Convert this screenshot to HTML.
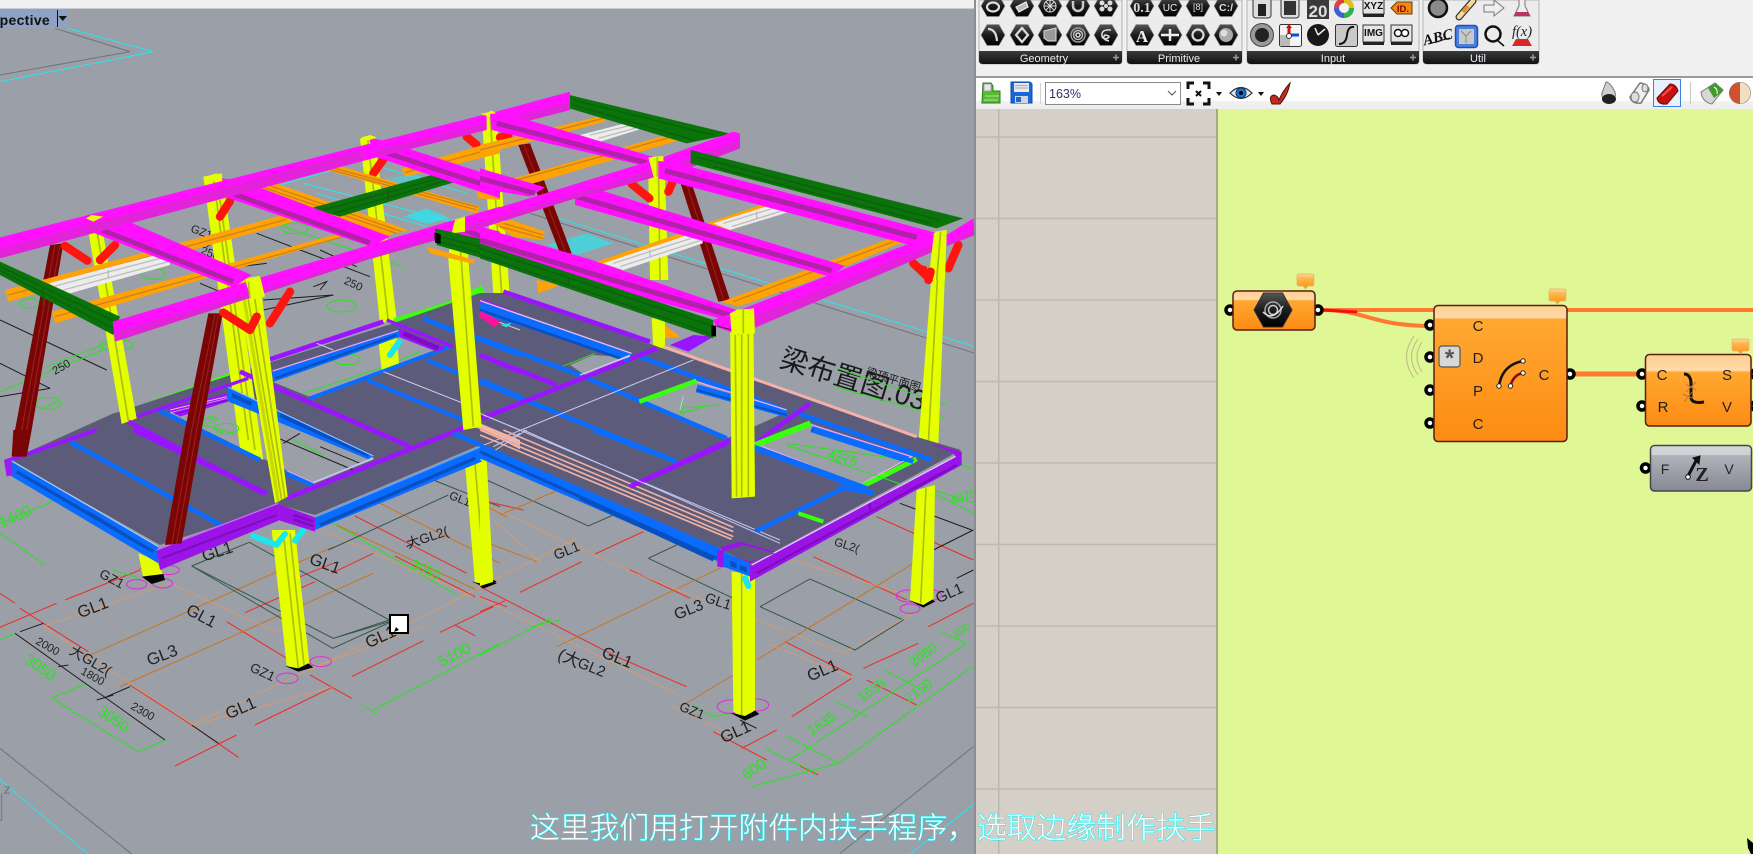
<!DOCTYPE html>
<html lang="zh"><head><meta charset="utf-8"><title>Rhino Grasshopper</title>
<style>
html,body{margin:0;padding:0;background:#f0f0f0;overflow:hidden}
svg{display:block}
text{font-family:"Liberation Sans","Noto Sans CJK SC",sans-serif}
.r{stroke:#f02a20;stroke-width:3;fill:none}
.g{stroke:#25e61c;stroke-width:3;fill:none}
.o{stroke:#c8751c;stroke-width:3;fill:none}
.p{stroke:#f09a55;stroke-width:3;stroke-dasharray:5 3;fill:none}
.k{stroke:#1c1c1c;stroke-width:3;fill:none}
.d{stroke:#34574a;stroke-width:3;fill:none}
.m{stroke:#e22ad8;stroke-width:3;fill:none}
.t{fill:#222;font-size:50px}
.tg{fill:#25e61c;font-size:46px}
.ts{fill:#222;font-size:34px}
.y{fill:#e4ff00}
.ys{stroke:#aebd10;stroke-width:5;fill:none}
.pk{fill:#ff10ff}
.ps{fill:#cf30c2}
.pw{stroke:#b022a8;fill:none}
.gn{fill:#0a740a}
.gl{stroke:#0d5f0d;stroke-width:4;fill:none}
.or{fill:#ffa205}
.ol{stroke:#c9831a;stroke-width:4;fill:none}
.wh{fill:#ececec}
.wl{stroke:#bdbdbd;stroke-width:4;fill:none}
.dr{fill:#7a0505}
.dl{stroke:#9c2222;stroke-width:3;fill:none}
.rd{stroke:#ff1510;stroke-width:25;fill:none;stroke-linejoin:round;stroke-linecap:round}
.cy{stroke:#1be6f0;stroke-width:18;fill:none;stroke-linejoin:round;stroke-linecap:round}
.bl{stroke:#0a6cff;fill:none}
.pu{stroke:#9a14ff;fill:none}
.lm{stroke:#3cff10;fill:none}
.lab{fill:#222;font-size:15px}
.bar{fill:#e8eef2;font-size:11px;text-anchor:middle}
.gr{fill:#fff;stroke:#000;stroke-width:3.5}
</style></head><body>
<svg xmlns="http://www.w3.org/2000/svg" width="1753" height="854" viewBox="0 0 1753 854">
<defs>
<linearGradient id="og" x1="0" y1="0" x2="0" y2="1"><stop offset="0" stop-color="#ffcf90"/><stop offset=".09" stop-color="#ffd9a8"/><stop offset=".1" stop-color="#ffa831"/><stop offset="1" stop-color="#fd8b12"/></linearGradient>
<linearGradient id="og2" x1="0" y1="0" x2="0" y2="1"><stop offset="0" stop-color="#ffcf90"/><stop offset=".22" stop-color="#ffd9a8"/><stop offset=".25" stop-color="#ffa831"/><stop offset="1" stop-color="#fd8b12"/></linearGradient>
<linearGradient id="gy" x1="0" y1="0" x2="0" y2="1"><stop offset="0" stop-color="#d4d6da"/><stop offset=".2" stop-color="#cfd1d5"/><stop offset=".22" stop-color="#b0b3ba"/><stop offset="1" stop-color="#868993"/></linearGradient>
<linearGradient id="hx" x1="0" y1="0" x2="0" y2="1"><stop offset="0" stop-color="#555"/><stop offset=".5" stop-color="#1c1c1c"/><stop offset="1" stop-color="#000"/></linearGradient>
<linearGradient id="br" x1="0" y1="0" x2="0" y2="1"><stop offset="0" stop-color="#3a3a3a"/><stop offset="1" stop-color="#111"/></linearGradient>
<linearGradient id="tb" x1="0" y1="0" x2="0" y2="1"><stop offset="0" stop-color="#fff"/><stop offset=".75" stop-color="#fdfdfd"/><stop offset=".78" stop-color="#f0f0f0"/><stop offset="1" stop-color="#eee"/></linearGradient>
<linearGradient id="bub" x1="0" y1="0" x2="0" y2="1"><stop offset="0" stop-color="#ffd9a0"/><stop offset=".3" stop-color="#ffb64a"/><stop offset="1" stop-color="#fc9416"/></linearGradient>
<path id="h" d="M-12 0L-6-10.500H6L12 0 6 10.500H-6Z" fill="url(#hx)" stroke="#999" stroke-width=".6"/>
<path id="bb" d="M2 0H15Q17 0 17 2V10Q17 12 15 12H11L8.500 15 6 12H2Q0 12 0 10V2Q0 0 2 0Z" fill="url(#bub)" stroke="#e4b070" stroke-width=".7"/>
</defs>

<!-- viewport -->
<rect width="1753" height="854" fill="#f0f0f0"/>
<rect x="0" y="8" width="975" height="846" fill="#9b9fa8"/>
<rect x="0" y="8" width="975" height="1" fill="#c8ccd2"/>

<!-- far lines -->
<g transform="scale(.33333)" fill="none">
<path d="M165 85L390 155 0 225" stroke="#6f7276" stroke-width="3"/>
<path d="M205 85L460 155 0 245" stroke="#22e8ee" stroke-width="3"/>
</g>
<g transform="translate(480 80) scale(.33333)" fill="none">
<path d="M150 400L1485 820" stroke="#6f7276" stroke-width="3"/>
<path d="M220 410L1485 800" stroke="#22e8ee" stroke-width="3"/>
<path d="M200 495L320 460 400 490 290 525Z" fill="#34dfe8" opacity=".75"/>
</g>
<g transform="scale(.33333)" fill="none">
<path d="M840 555L1000 510M910 550L1360 665M950 580L1280 680M1140 500L1400 580" stroke="#2ae6ee" stroke-width="3"/>
<path d="M1210 650L1280 625 1350 655 1280 672Z" fill="#34dfe8" opacity=".85"/>
<path d="M1140 540L1240 520 1300 545 1200 565Z" fill="#34dfe8" opacity=".5"/>
<!-- drawing seen through upper structure -->
<path class="k" d="M0 960L320 1110M0 1090L150 1165M0 1190L150 1165 M770 700L1110 830M960 750L1070 800M600 850L790 930 1000 885 790 900"/>
<path class="k" d="M720 800L800 790M620 740L690 700M940 860L980 845 960 870"/>
<path class="g" d="M140 1100L320 1030M0 1175L310 1050M130 1225L180 1200M850 680L1210 800"/>
<ellipse class="g" cx="460" cy="822" rx="36" ry="16"/><ellipse class="g" cx="1025" cy="918" rx="44" ry="18"/><ellipse class="g" cx="90" cy="910" rx="30" ry="14"/><ellipse class="g" cx="145" cy="1210" rx="38" ry="18"/><ellipse class="g" cx="885" cy="685" rx="40" ry="16"/>
<ellipse class="g" cx="1040" cy="1080" rx="40" ry="16"/><ellipse class="g" cx="350" cy="1035" rx="50" ry="16"/>
<text class="ts" transform="translate(570 695) rotate(20)">GZ1</text>
<text class="ts" transform="translate(1030 850) rotate(25)">250</text>
<text class="ts" transform="translate(165 1125) rotate(-30)">250</text>
<text class="ts" transform="translate(600 760) rotate(20)">250</text>
</g>
<g transform="translate(0 430) scale(.33333)" fill="none">
<path d="M0 955L395 1272" stroke="#6f7276" stroke-width="3"/>
<path d="M0 1050L265 1272" stroke="#22e8ee" stroke-width="3"/>
<path d="M5 1090V1170L0 1172" stroke="#777" stroke-width="3"/>
<text x="12" y="1090" fill="#666" font-size="30" stroke="none">Z</text>

<path class="r" d="M0 592L170 520M195 510L420 420M0 490L45 520M60 535L130 580 265 665M390 765L575 885 715 982M525 1008L710 915M765 885L1000 770M1055 740L1270 632M1320 607L1480 530M680 575L860 685M930 735L1055 805M735 548L945 455M995 430L1120 370M1065 258L1400 430M1185 378L1425 500M1365 585L1425 617M1000 400L900 440M480 400L420 415"/>
<path class="g" d="M0 630L45 610M0 310L135 405M155 805L415 965M155 805L260 760M415 965L495 930M1085 825L1135 855M1120 840L1500 640M1000 280L1370 495M0 280L170 210M340 420L420 445"/>
<path class="o" d="M260 680L910 390M360 770L1120 430M1100 200L1500 400M1010 285L1430 480M890 400L1000 350"/>
<path class="p" d="M130 590L510 460M130 590L580 885 1000 770M510 460L840 610M575 885L1310 540 1500 440M920 720L1270 590M850 250L1420 500"/>
<path class="k" d="M45 610L495 930M60 605L130 580M320 800L390 770M575 885L655 940M290 810L340 795M175 710L205 705M1220 350L1240 340"/>
<path class="d" d="M575 408L748 337 1168 570 1000 625 575 408M575 408L998 655 1168 578M1000 625L1168 575M985 360L1345 195M1300 150L1500 230"/>
<ellipse class="m" cx="410" cy="463" rx="30" ry="14"/><ellipse class="m" cx="488" cy="460" rx="30" ry="14"/><ellipse class="m" cx="505" cy="420" rx="33" ry="14"/>
<ellipse class="m" cx="862" cy="745" rx="32" ry="16"/><ellipse class="m" cx="962" cy="695" rx="32" ry="15"/>
<text class="t" transform="translate(240 565) rotate(-21)">GL1</text>
<text class="t" transform="translate(555 550) rotate(28)">GL1</text>
<text class="t" transform="translate(448 708) rotate(-21)">GL3</text>
<text class="t" transform="translate(685 868) rotate(-23)">GL1</text>
<text class="t" transform="translate(612 395) rotate(-18)">GL1</text>
<text class="t" transform="translate(925 400) rotate(20)">GL1</text>
<text class="t" transform="translate(1105 655) rotate(-24)">GL1</text>
<text class="t" transform="translate(1225 355) rotate(-18) scale(.8)">大GL2(</text>
<text class="t" transform="translate(295 440) rotate(28) scale(.8)">GZ1</text>
<text class="t" transform="translate(747 722) rotate(25) scale(.8)">GZ1</text>
<text class="t" transform="translate(205 670) rotate(30) scale(.85)">大GL2(</text>
<text class="t" transform="translate(1345 205) rotate(22) scale(.7)">GL1</text>
<text class="tg" transform="translate(1325 712) rotate(-28)">5100</text>
<text class="tg" transform="translate(70 695) rotate(35)">3050</text>
<text class="tg" transform="translate(290 850) rotate(35)">3050</text>
<text class="tg" transform="translate(5 295) rotate(-24)">1400</text>
<text class="tg" transform="translate(1230 412) rotate(25) scale(.9)">3050</text>
<text class="ts" transform="translate(105 640) rotate(30)">2000</text>
<text class="ts" transform="translate(390 835) rotate(30)">2300</text>
<text class="ts" transform="translate(240 730) rotate(30)">1800</text>
</g>
<g transform="translate(480 430) scale(.33333)" fill="none">
<path class="d" d="M20 150L325 288 400 255M505 385L590 345M505 385L760 505M840 530L990 447 1270 570 1125 660 840 530"/>
<path class="r" d="M0 545L75 512M120 487L305 395M345 372L490 305M0 470L410 680 620 770M130 240L0 210 M450 420L630 505M785 955L890 900M935 860L1115 745M1150 715L1315 640M1345 590L1480 520M915 635L1115 735M1160 750L1310 825M0 500L80 530M1190 260L1480 390M1000 380L1280 510M960 1008L1015 1035M700 905L860 990"/>
<path class="o" d="M0 330L170 395M230 650L750 400M610 825L760 735M830 690L1300 400M60 255L270 165M0 220L80 260"/>
<path class="p" d="M10 220L440 420 1090 670M40 450L300 320M0 505L610 800M575 830L750 910M860 640L1120 745 M820 355L1300 500M1090 670L1300 550M20 250L180 395"/>
<path class="k" d="M1360 360L1480 300M1260 220L1475 300M1430 445L1480 420M780 870L830 895"/>
<path class="g" d="M0 675L215 565M155 590L240 570M815 1070L1075 1000M1075 1000L1485 705M855 955L1010 1030M930 990L1460 640M915 915L1075 1000M1065 815L1165 860M1210 720L1310 770M1380 605L1460 640M1480 120L1360 60M1290 155L1480 250M640 825L700 860 750 850"/>
<ellipse class="m" cx="750" cy="830" rx="38" ry="20"/><ellipse class="m" cx="830" cy="825" rx="36" ry="18"/><ellipse class="m" cx="1285" cy="498" rx="36" ry="18"/><ellipse class="m" cx="1350" cy="495" rx="34" ry="16"/><ellipse class="m" cx="1290" cy="536" rx="30" ry="14"/>
<text class="t" transform="translate(228 390) rotate(-22) scale(.85)">GL1</text>
<text class="t" transform="translate(590 570) rotate(-22) scale(.95)">GL3</text>
<text class="t" transform="translate(672 515) rotate(18) scale(.85)">GL1</text>
<text class="t" transform="translate(362 680) rotate(22)">GL1</text>
<text class="t" transform="translate(230 685) rotate(25)">(大</text>
<text class="t" transform="translate(290 710) rotate(22) scale(.9)">GL2</text>
<text class="t" transform="translate(990 755) rotate(-23)">GL1</text>
<text class="t" transform="translate(730 940) rotate(-24)">GL1</text>
<text class="t" transform="translate(1375 520) rotate(-24) scale(.9)">GL1</text>
<text class="t" transform="translate(595 840) rotate(22) scale(.8)">GZ1</text>
<text class="t" transform="translate(1060 345) rotate(18) scale(.7)">GL2(</text>
<text class="tg" transform="translate(800 1052) rotate(-35)">600</text>
<text class="tg" transform="translate(995 918) rotate(-35) scale(.9)">1635</text>
<text class="tg" transform="translate(1145 818) rotate(-35) scale(.9)">1635</text>
<text class="tg" transform="translate(1300 712) rotate(-35) scale(.9)">2080</text>
<text class="tg" transform="translate(1285 820) rotate(-35) scale(.9)">2150</text>
<text class="tg" transform="translate(1430 625) rotate(-35) scale(.7)">800</text>
<text class="tg" transform="translate(1415 225) rotate(-18) scale(.8)">4075</text>
<path d="M1080 1270L1480 950" stroke="#6f7276" stroke-width="3"/>
<path d="M1290 1272L1485 1120" stroke="#22e8ee" stroke-width="3"/>
</g>
<!-- big drawing title -->
<g transform="translate(480 80) scale(.33333)">
<text transform="translate(895 860) rotate(17)" font-size="84" fill="#1a1a1a">梁布置图.03</text>
<text transform="translate(1155 885) rotate(17)" font-size="34" fill="#1a1a1a">梁顶平面图 1:1</text>
<path class="g" d="M1070 865L1400 975M1060 920L1390 1010M920 1090L1485 1270"/>
</g>

<!-- back columns behind slab -->
<g transform="scale(.33333)">
<path class="y" d="M1080 415L1125 410 1190 960 1140 970Z"/><path class="ys" d="M1103 415L1165 965"/>
</g>
<g transform="translate(480 80) scale(.33333)">
<path class="y" d="M5 100L50 95 100 800 50 800Z"/><path class="ys" d="M30 100L75 800"/>
<path class="y" d="M520 230L553 230 565 600 510 600 505 290Z"/><path class="ys" d="M535 235L540 600"/>
<path class="y" d="M515 715L555 715 555 810 520 800Z"/>
<path class="y" d="M1365 455L1400 450 1375 1090 1315 1090Z"/><path class="ys" d="M1380 455L1345 1090"/>
</g>
<g transform="translate(0 430) scale(.33333)">
<path class="y" d="M415 370L470 390 490 435 430 445Z"/>
<path d="M425 440L490 432 495 450 455 462Z" fill="#050505"/>
<path class="y" d="M815 300L885 300 928 700 895 725 860 705Z"/><path class="ys" d="M850 310L895 715M870 310L912 705"/>
<path d="M855 708L895 725 940 712 925 700 895 715Z" fill="#050505"/>
<path class="y" d="M1395 100L1450 90 1480 450 1450 465 1425 460Z"/><path class="ys" d="M1425 100L1455 455"/>
<path d="M1415 455L1450 470 1490 455 1478 448 1450 462Z" fill="#050505"/>
<path class="cy" d="M760 318L830 345 855 312M885 332L910 300"/>
</g>
<g transform="translate(480 430) scale(.33333)">
<path class="y" d="M0 90L20 90 40 460 0 470Z"/>
<path d="M0 468L42 455 50 460 10 476Z" fill="#050505"/>
<path class="y" d="M755 425L825 430 825 840 795 865 760 845Z"/><path class="ys" d="M785 430V855"/>
<path d="M750 848L795 872 838 852 825 842 795 858Z" fill="#050505"/>
<path class="y" d="M1310 180L1365 165 1360 510 1330 530 1290 510Z"/><path class="ys" d="M1338 175L1322 520"/>
<path d="M1285 510L1330 533 1365 515 1358 508 1330 525Z" fill="#050505"/>
<path class="cy" d="M795 445L805 468" stroke-width="12"/>
</g>

<!-- lime back beams -->
<g transform="scale(.33333)">
<path d="M405 1220L700 1115 705 1135 410 1245Z" fill="#3cff10"/>
<path d="M1180 955L1360 900 1360 925 1185 980Z" fill="#3cff10"/><path class="lm" stroke-width="25" d="M1360 912L1450 868"/>
</g>

<!-- slab -->
<path d="M10 460L160 545 280 505 315 515 480 445 723 550 750 565 961 450 917 437 653 345 510 293 480 293 391 324 240 372 112 414Z" fill="#5c5c7a"/>
<!-- openings -->
<path d="M170 413L227 398 373 458 313 483Z" fill="#9b9fa8"/>
<path d="M273 382L400 337 445 350 380 372 310 397Z" fill="#9b9fa8"/>
<path d="M643 402L697 382 787 412 728 438Z" fill="#9b9fa8"/>
<path d="M757 445L810 423 910 457 860 485Z" fill="#9b9fa8"/>
<path d="M570 365L593 355 625 357 585 375Z" fill="#9b9fa8"/>

<!-- columns that stand inside/over the slab (col 1, col 3) -->
<g transform="scale(.33333)">
<path class="y" d="M258 655L300 650 410 1255 365 1272Z"/><path class="ys" d="M285 655L385 1262"/>
<path class="y" d="M610 530L665 520 730 960 790 1380 720 1345 670 980Z"/><path class="ys" d="M640 530L745 1320M660 600L765 1350"/>
</g>

<!-- floor beams: left-centre region, crop coords -->
<g transform="translate(120 300) scale(.33333)" fill="none">
<!-- ground seen in openings -->
<path class="g" d="M550 280L780 205 900 155M250 375L340 400M520 420L610 465"/>
<ellipse class="g" cx="680" cy="178" rx="40" ry="16"/><ellipse class="g" cx="320" cy="385" rx="36" ry="15"/>
<path class="k" d="M440 400L700 510M490 430L540 400M600 440L720 490"/>
<text class="tg" transform="translate(250 375) rotate(-18) scale(.6)">250</text>
<!-- col 4 lower in opening -->
<path class="y" d="M775 120L830 110 838 200 785 210Z" stroke="none"/>
<path class="cy" d="M810 165L838 125"/>
<!-- lines -->
<path class="bl" stroke-width="14" d="M115 330L420 480M495 520L580 555"/>
<path class="bl" stroke-width="12" d="M570 295L990 140M740 240L1030 360M920 180L1030 225M1085 240L1200 290"/>
<path class="bl" stroke-width="14" d="M910 55L1020 100M1060 110L1200 165"/>
<path class="pu" stroke-width="14" d="M25 365L430 580M360 215L870 440M500 595L1045 378M1085 355L1200 310M450 178L790 65M1080 165L1200 215"/>
<path class="pu" stroke-width="10" d="M50 350L385 235M800 60L1000 140"/>
<!-- purple opening band -->
<path d="M140 325L320 280 325 305 180 350Z" fill="#9a14ff"/>
<path d="M150 330L320 290" stroke="#f0b0f0" stroke-width="3"/><path d="M165 342L322 300" stroke="#7e0cc0" stroke-width="4"/>
<!-- thick blue stub beam -->
<path d="M320 258L760 465 745 478 400 335 325 305Z" fill="#0a6cff"/>
<path d="M335 285L395 312M480 345L745 465" stroke="#0850c0" stroke-width="12"/>
<path d="M325 262L760 468" stroke="#9fc6ff" stroke-width="3"/>
<path d="M580 548L760 475" stroke="#c8c0f0" stroke-width="6"/>
<path d="M500 512L580 548" stroke="#f0a0f0" stroke-width="3"/>
<path d="M150 338L322 295" stroke="#f0b0f0" stroke-width="2"/>
<!-- right double blue beam -->
<path d="M455 215L835 88 840 110 462 245Z" fill="#0a6cff"/>
<path d="M465 235L830 105" stroke="#0850c0" stroke-width="7"/>
<path d="M458 213L835 92" stroke="#f0a0f0" stroke-width="4"/>
<path d="M838 85L978 143 950 155 840 112Z" fill="#9a14ff"/>
<path d="M850 100L955 145" stroke="#7e0cc0" stroke-width="14"/>
<path d="M590 130L640 150M1120 60L1200 90" stroke="#d0d0f0" stroke-width="3"/>
<path stroke="#d5d0f0" stroke-width="3" d="M790 215L1030 310M1090 345L1200 390M1120 440L1200 400"/>
<!-- top right bits -->
<path d="M1075 5L1095 0 1200 40 1200 55 1090 15Z" fill="#9a14ff"/>
<path d="M1085 15L1200 55 1200 80 1085 40Z" fill="#0a6cff"/>
<path d="M1095 32L1200 70" stroke="#0850c0" stroke-width="7"/>
<path d="M1090 42L1135 72" stroke="#ff10a0" stroke-width="16"/>
<!-- pink rail -->
<path d="M1050 370L1075 368 1200 420 1200 448Z" fill="#f5b8a8"/>
<path d="M1060 378L1200 436" stroke="#e59a90" stroke-width="3"/>
<path d="M1000 400L1082 435" stroke="#0a6cff" stroke-width="14"/>
</g>
<g transform="translate(480 80) scale(.33333)">
<path class="g" d="M245 860L345 820M600 985L720 975M920 1090L1280 1140M660 985L600 1000M610 960L600 1000" />
<text class="tg" transform="translate(1040 1135) rotate(16) scale(.9)">4275</text>
<path class="bl" stroke-width="14" d="M0 775L300 885 740 1075M0 905L590 1145M480 830L900 985M940 995L1355 1140M825 1105L1180 1240"/>
<path class="pu" stroke-width="14" d="M70 635L510 785M20 1010L530 805M0 825L230 915M450 1220L740 1090M820 1095L990 970"/>
<path d="M570 795L640 765 700 770 625 815Z" fill="#9a14ff"/>
<path class="bl" stroke-width="30" d="M0 680L450 832"/>
<path stroke="#0850c0" stroke-width="8" fill="none" d="M0 690L430 838"/>
<path stroke="#f0b8e8" stroke-width="4" fill="none" d="M0 662L455 820M300 885L450 828"/>
<path stroke="#f5b0a8" stroke-width="9" fill="none" d="M550 800L1310 1070"/>
<path class="bl" stroke-width="24" d="M650 925L920 1000M995 1045L1290 1140"/>
<path stroke="#0850c0" stroke-width="6" fill="none" d="M650 930L920 1005M995 1050L1290 1145"/>
<path stroke="#f0a8f0" stroke-width="4" fill="none" d="M650 905L920 990M835 1095L1140 1215 1295 1130 995 1035"/>
<path class="lm" stroke-width="14" d="M478 965L650 902"/>
<path class="lm" stroke-width="18" d="M825 1095L992 1030"/>
<path class="lm" stroke-width="15" d="M1145 1220L1310 1137"/>
<path stroke="#c8c8f0" stroke-width="3" fill="none" d="M0 1100L640 840M0 1000L900 1380M300 885L450 825M610 950L600 990"/>
<path stroke="#ff10a0" stroke-width="18" fill="none" d="M0 700L50 735"/><path d="M62 735L95 728 80 742Z" fill="#1be6f0"/>
</g>
<g transform="translate(0 430) scale(.33333)">
<path class="bl" stroke-width="14" d="M210 35L680 295"/>
<path class="pu" stroke-width="14" d="M400 0L800 190"/>
<path class="pu" stroke-width="12" d="M15 95L290 0"/>
<!-- front edge beams -->
<path d="M25 90L475 350 475 400 20 130Z" fill="#0a6cff"/>
<path d="M50 125L460 365M260 245L400 330" stroke="#0850c0" stroke-width="10" fill="none"/>
<path d="M35 92L475 350" stroke="#a8d0ff" stroke-width="3" fill="none"/>
<path d="M12 92L35 90 38 135 20 140Z" fill="#a01bf0"/>
<path d="M470 360L835 220 840 270 480 420Z" fill="#9a14e8"/>
<path d="M485 385L830 255" stroke="#7e0cc0" stroke-width="6" fill="none"/>
<path d="M470 360L835 220" stroke="#c66cff" stroke-width="4" fill="none"/>
<path d="M835 222L945 262 945 305 840 272Z" fill="#9a14e8"/>
<path d="M880 255L940 275M880 268L940 288" stroke="#7e0cc0" stroke-width="8" fill="none"/>
<path d="M945 260L1440 50 1445 95 945 300Z" fill="#0a6cff"/>
<path d="M960 285L1425 85" stroke="#0850c0" stroke-width="10" fill="none"/>
<path d="M945 262L1440 52" stroke="#6aa8ff" stroke-width="3" fill="none"/>
</g>
<g transform="translate(480 430) scale(.33333)">
<path stroke="#f0b0a0" stroke-width="5" fill="none" d="M0 0L760 320M30 0L760 305M70 0L760 292M0 15L755 328"/>
<path class="bl" stroke-width="14" d="M340 0L590 95M825 305L1100 170M1075 170L1180 190M820 50L1160 175M1000 0L1300 95"/>
<path class="pu" stroke-width="14" d="M450 170L750 30"/>
<path class="lm" stroke-width="12" d="M955 250L1030 275"/>
<path stroke="#c8c8f0" stroke-width="3" fill="none" d="M130 0L900 340M0 90L140 0"/>
<path class="g" d="M920 45L1285 170M1050 70L1100 90"/>
<path d="M0 40L720 355 715 395 0 85Z" fill="#0a6cff"/>
<path d="M0 65L710 385M300 205L700 390" stroke="#0850c0" stroke-width="9" fill="none"/>
<path d="M712 365L735 350 735 412 712 410Z" fill="#9a14e8"/>
<path d="M730 365L810 400 810 440 730 410Z" fill="#0a6cff"/>
<path d="M750 392L770 400V415L750 408ZM780 405L800 412V428L780 420Z" fill="#0850c0"/>
<path d="M810 405L1440 70 1445 105 810 455Z" fill="#9a14e8"/>
<path d="M830 430L1430 105M1170 240L1170 215" stroke="#7e0cc0" stroke-width="7" fill="none"/>
<path d="M815 405L1440 72" stroke="#e6c8ff" stroke-width="4" fill="none"/>
<path d="M1350 40L1445 65 1445 105 1420 70Z" fill="#9a14e8"/>
<path d="M720 352L780 335 885 365 810 400Z" fill="#9a14e8"/>
<path d="M790 345L885 370 810 395 730 365Z" fill="#5c5c7a"/>
</g>

<!-- front columns + braces -->
<g transform="scale(.33333)">
<path class="dr" d="M150 735L190 730 95 1290 45 1290Z"/><path class="dl" d="M165 735L65 1290M180 735L80 1290"/>
<path class="y" d="M708 840L778 828 863 1490 825 1510Z"/>
<path class="ys" d="M735 840L845 1500M755 835L855 1495"/>
<path d="M723 840L835 1505" stroke="#c6d900" stroke-width="10" fill="none"/>
<path class="dr" d="M625 940L668 940 605 1290 555 1290Z"/><path class="dl" d="M645 945L575 1290M655 945L590 1290"/>
<path class="y" d="M1355 660L1395 650 1445 1280 1390 1290 1345 780Z"/><path class="ys" d="M1375 660L1420 1280"/>
</g>
<g transform="translate(0 430) scale(.33333)">
<path class="dr" d="M40 0L95 0 80 80 35 80Z"/>
<path class="dr" d="M555 0L605 0 545 340 495 345Z"/><path class="dl" d="M575 0L515 345M590 0L530 342"/>
</g>
<g transform="translate(480 80) scale(.33333)">
<path class="y" d="M750 690L820 685 825 1250 755 1255Z"/><path class="ys" d="M785 690V1250M765 690L770 1250M805 690V1250"/>
</g>

<!-- upper: reds -->
<g transform="scale(.33333)">
<path class="rd" d="M195 738L262 782M300 780L345 735M660 650L690 603M670 938L750 990 770 950M810 970L870 875M1120 520L1150 478M1400 410L1430 435"/>
</g>
<g transform="translate(480 80) scale(.33333)">
<path class="rd" d="M455 312L508 355M565 335L578 305M60 172L85 168M1300 550L1348 595M1405 565L1435 495"/>
<path class="dr" d="M115 195L150 190 275 520 240 520Z"/><path class="dl" d="M132 195L258 520"/>
<path class="dr" d="M600 305L635 310 750 660 715 665Z"/><path class="dl" d="M618 305L733 665"/>
</g>
<!-- orange + white purlins -->
<g transform="scale(.33333)">
<path class="or" d="M15 870L850 645 880 665 25 905Z"/><path class="ol" d="M25 885L860 658"/>
<path class="or" d="M155 935L1020 700 1050 705 165 970Z"/><path class="ol" d="M165 950L1030 710"/>
<path class="or" d="M745 550L800 540 1225 690 1150 710Z"/><path class="ol" d="M770 555L1190 700M790 550L1205 695"/>
<path class="or" d="M945 500L990 490 1440 620 1430 640Z"/><path class="ol" d="M970 503L1430 630M985 500L1435 622"/>
<path class="or" d="M1205 505L1500 420 1500 460 1215 530Z"/><path class="ol" d="M1215 518L1500 440"/>
<path class="or" d="M1280 740L1425 780 1420 792 1290 760Z"/><path class="or" d="M1430 570L1500 595 1500 600 1435 595Z"/>
<path class="wh" d="M145 850L505 755 510 795 210 880Z"/><path class="wl" d="M165 858L500 770M190 870L505 785M325 810V835"/>
</g>
<g transform="translate(480 80) scale(.33333)">
<path class="or" d="M0 195L375 105 375 125 0 225Z"/><path class="ol" d="M0 210L370 115"/>
<path class="or" d="M100 295L560 165 600 180 160 310Z"/><path class="ol" d="M110 300L570 172"/>
<path class="or" d="M0 330L20 325 0 355Z"/>
<path class="or" d="M40 430L95 420 195 455 190 480 100 470Z"/><path class="ol" d="M70 430L190 465M60 440L190 475"/>
<path class="or" d="M350 545L600 460 640 465 430 570Z"/>
<path class="or" d="M725 665L1230 475 1270 485 1000 600 775 680Z"/><path class="ol" d="M760 665L1240 485"/>
<path class="or" d="M680 430L850 372 860 380 750 450Z"/>
<path class="or" d="M170 600L240 615 175 640Z"/><path class="or" d="M555 735L600 770 555 775Z"/>
<path class="wh" d="M370 550L668 450 668 490 430 570Z"/><path class="wl" d="M400 550L665 465M420 560L665 480M510 510V530"/>
<path class="wh" d="M700 430L935 355 930 395 750 450Z"/><path class="wl" d="M730 430L930 370M755 440L930 385M830 395V415"/>
<path class="wh" d="M300 165L505 112 505 140 360 185Z"/><path class="wl" d="M330 165L500 125M355 175L500 135"/>
</g>
<!-- green + magenta -->
<g transform="scale(.33333)">
<path class="gn" d="M0 785L360 950 340 1005 0 825Z"/><path class="gl" d="M0 800L345 965M0 812L340 985M130 860L130 915"/>
<path class="gn" d="M930 625L1375 503 1385 510 1385 540 1020 650Z"/><path class="gl" d="M970 630L1380 518M1000 640L1380 530M1165 570V600"/>
<!-- cross beams -->
<path class="pk" d="M280 645L340 645 755 825 700 862 285 700Z"/>
<path class="pw" stroke-width="15" d="M305 690L700 845"/>
<path class="pk" d="M665 535L725 542 1170 710 1112 740 688 595Z"/>
<path class="pw" stroke-width="15" d="M690 578L1110 728"/>
<path class="pk" d="M1105 412L1150 422 1500 535 1500 595 1125 470Z"/>
<path class="pw" stroke-width="15" d="M1125 447L1500 570"/>
<path class="pk" d="M1380 665L1500 695 1500 765 1370 710Z"/>
<path class="pw" stroke-width="15" d="M1395 692L1500 728"/>
<!-- long beams -->
<path class="pk" d="M0 712L1460 342 1460 390 1100 480 0 775Z"/>
<path class="ps" d="M0 745L1090 450 1090 480 0 775ZM1130 450L1460 368 1460 388 1130 470Z" opacity=".6"/>
<path class="y" d="M258 655L275 645 310 650 280 665Z"/><path class="y" d="M610 532L650 520 668 528 640 545Z"/><path class="y" d="M1085 412L1110 405 1130 412 1105 422Z"/>
<path class="y" d="M1450 345L1480 338 1500 345 1475 352Z"/>
<path class="pk" d="M338 965L1355 662 1500 620 1500 665 1100 780 345 1025Z"/>
<path class="ps" d="M345 995L740 882 1080 775 1500 645 1500 665 1100 780 345 1025Z" opacity=".6"/>
<path class="y" d="M735 840L780 828 795 890 755 900Z"/><path class="ys" d="M745 845L750 895"/>
<path class="y" d="M1365 660L1395 650 1395 695 1355 700Z"/>
<path class="gn" d="M1305 685L1500 730 1500 790 1310 735Z"/><path class="gl" d="M1320 710L1500 755M1320 725L1500 775"/>
<path d="M1303 698L1322 702 1322 732 1305 728Z" fill="#000"/>
</g>
<g transform="translate(480 80) scale(.33333)">
<path class="gn" d="M268 45L755 162 620 190 268 85Z"/><path class="gl" d="M280 60L700 165M280 75L640 180"/>
<path class="pk" d="M30 100L270 35 270 90 40 150Z"/><path class="ps" d="M40 125L270 65 270 90 40 150Z" opacity=".6"/>
<path class="y" d="M15 100L35 92 50 100 25 110Z"/>
<!-- upper far cap -->
<path class="pk" d="M540 235L760 155 780 160 780 205 560 290Z"/><path class="ps" d="M580 255L775 180 780 205 580 280Z" opacity=".6"/>
<path class="pk" d="M30 102L68 98 525 232 512 262 35 150Z"/><path class="pw" stroke-width="15" d="M50 130L500 248"/>
<path class="pk" d="M0 265L195 322 150 350 0 325Z"/><path class="pw" stroke-width="15" d="M0 295L165 340"/>
<path class="pk" d="M285 325L365 332 1095 558 1050 590 285 375Z"/><path class="pw" stroke-width="15" d="M290 350L1055 572"/>
<path d="M0 400L520 240 530 290 270 360 0 445Z" fill="#ff10ff"/><path class="ps" d="M0 428L520 268 530 290 270 360 0 445Z" opacity=".6"/>
<path class="y" d="M505 232L550 228 552 290 522 295Z"/><path class="ys" d="M532 232V290"/>
<path class="gn" d="M632 210L1450 415 1370 445 632 250Z"/><path class="gl" d="M645 230L1380 420M700 260L1350 430"/>
<path class="pk" d="M535 243L585 248 1365 458 1290 495 535 295Z"/><path class="pw" stroke-width="16" d="M555 272L1310 472"/>
<path class="pk" d="M0 442L330 538 775 692 755 724 0 523Z"/><path class="pw" stroke-width="16" d="M0 480L750 706"/>
<path class="gn" d="M0 490L700 720 700 775 0 535Z"/><path class="gl" d="M0 505L690 735M0 525L690 760M265 590V615"/>
<path d="M694 735L708 738 708 770 694 768Z" fill="#000"/>
<path class="pk" d="M700 720L780 690 1365 460 1360 515 820 745 775 765 708 740Z"/>
<path class="ps" d="M820 708L1365 492 1360 515 820 745Z" opacity=".6"/>
<path d="M710 738L765 752" stroke="#333" stroke-width="3"/>
<path class="pk" d="M1400 465L1480 415 1485 465 1400 498Z"/><path class="ps" d="M1405 488L1480 448 1485 465 1400 498Z" opacity=".6"/>
<path class="y" d="M1362 460L1400 450 1395 600 1345 600Z"/><path class="ys" d="M1382 455L1370 600"/>
<path class="y" d="M770 690L822 685 825 760 755 765 750 700Z"/><path class="ys" d="M790 690V760"/>
<path d="M1295 545L1340 560 1350 605 1325 590Z" fill="#ff1510"/>
<path class="rd" d="M1345 600L1352 575"/>
</g>

<!-- cursor box -->
<rect x="390" y="615" width="18" height="18" fill="#fff" stroke="#000" stroke-width="2"/>
<path d="M396 627L394 632 399 630Z" fill="#000"/>

<!-- toolbar tab -->
<rect x="0" y="9" width="68" height="19" fill="#8fa2c4"/>
<text x="50" y="25" text-anchor="end" font-size="14" font-weight="700" fill="#111" style="letter-spacing:.3px">pective</text>
<rect x="57" y="10" width="1" height="17" fill="#111"/>
<path d="M58.500 16H67L62.800 21Z" fill="#111"/>

<!-- right side panel -->
<rect x="975" y="0" width="778" height="854" fill="#f0f0f0"/>
<rect x="974" y="0" width="2" height="854" fill="#8a8d92"/>
<!-- canvas -->
<rect x="976" y="108" width="241" height="746" fill="#d4d0c8"/>
<path d="M976 137H1217M976 218.500H1217M976 300H1217M976 381.500H1217M976 463H1217M976 544.500H1217M976 626H1217M976 707.500H1217M976 789H1217" stroke="#bdb9b1" stroke-width="1.500"/>
<rect x="998" y="108" width="1.500" height="746" fill="#bdb9b1"/>
<rect x="1217" y="108" width="536" height="746" fill="#dff795"/>
<rect x="1216" y="108" width="2" height="746" fill="#a7a98f"/>
<path d="M1218 137H1753M1218 218.500H1753M1218 300H1753M1218 381.500H1753M1218 463H1753M1218 544.500H1753M1218 626H1753M1218 707.500H1753M1218 789H1753M1236 108V854M1480 108V854" stroke="#dcf492" stroke-width="1"/>

<!-- toolbar -->
<rect x="976" y="76" width="777" height="33" fill="url(#tb)"/>
<rect x="976" y="76" width="777" height="2" fill="#9a9a9a"/>
<path d="M983 83H991L993 86V91H1000V103H982Z" fill="#58b935" stroke="#2d7a20"/><path d="M984 84H991V91H984Z" fill="#e6e6e6" stroke="#999" stroke-width=".7"/><path d="M985 96H999M984 100H998" stroke="#b5e38a"/>
<path d="M1011 82H1030L1032 84V103H1011Z" fill="#1767d8" stroke="#0f4aa8"/><rect x="1014" y="83" width="15" height="9" fill="#e8e8ea"/><path d="M1015 85.500H1028M1015 88H1028" stroke="#aaa"/><rect x="1015" y="96" width="13" height="7" fill="#d0d4dc"/><rect x="1016" y="97" width="5" height="5" fill="#1767d8"/>
<rect x="1040" y="83" width="1" height="21" fill="#d0d0d0"/>
<rect x="1045.500" y="82.500" width="135" height="22" fill="#fff" stroke="#8a8a8a"/>
<text x="1049" y="98" font-size="12.500" fill="#30306a">163%</text>
<path d="M1168 91L1172 95 1176 91" fill="none" stroke="#666" stroke-width="1.200"/>
<path d="M1188 89V83H1194M1203 83H1209V89M1188 98V104H1194M1203 104H1209V98" fill="none" stroke="#111" stroke-width="3"/><path d="M1196 91L1201 96M1201 91L1196 96" stroke="#111" stroke-width="2"/>
<path d="M1216 92H1222L1219 96Z" fill="#111"/>
<path d="M1230 93Q1241 82 1252 93 1241 104 1230 93Z" fill="#d8e6f4" stroke="#333" stroke-width="1.200"/><circle cx="1241" cy="93" r="5" fill="#1b74c8" stroke="#0c3a6a"/><circle cx="1241" cy="93" r="2" fill="#000"/>
<path d="M1258 92H1264L1261 96Z" fill="#111"/>
<path d="M1272 104Q1268 96 1274 95 1278 96 1279 100 1282 92 1290 83 1288 95 1280 104Z" fill="#c9261c" stroke="#4a1512" stroke-width="1"/>
<path d="M1606 82Q1610 82 1615 92 1617 100 1608 100 1601 100 1602 93Z" fill="#cfcfcf" stroke="#777"/><ellipse cx="1609" cy="99" rx="7" ry="5" fill="#222"/>
<path d="M1630 97L1640 83Q1648 84 1649 90L1641 103Q1632 104 1630 97Z" fill="#f0f0f0" stroke="#777" stroke-width="1.500"/><ellipse cx="1635" cy="97" rx="4" ry="5" fill="#ddd" stroke="#777"/><ellipse cx="1645" cy="88" rx="3" ry="4" fill="#ddd" stroke="#777"/>
<rect x="1653.500" y="79.500" width="27" height="27" fill="#e8f1fb" stroke="#3b83e0"/>
<path d="M1657 98L1670 84Q1676 84 1678 91L1667 104Q1658 105 1657 98Z" fill="#c8100e" stroke="#6a0808"/><path d="M1662 96L1672 87" stroke="#f05050" stroke-width="2"/>
<rect x="1690" y="82" width="1" height="22" fill="#c8c8c8"/>
<path d="M1701 92L1715 83 1723 90 1712 104Q1702 102 1701 92Z" fill="#d6d6d6" stroke="#777"/><path d="M1708 88L1716 83 1723 91 1714 98Z" fill="#3e9a2a"/><path d="M1714 87Q1718 89 1717 94" stroke="#fff" fill="none"/>
<circle cx="1740" cy="93" r="10.500" fill="#e8e8e8" stroke="#777"/><path d="M1740 82.500A10.500 10.500 0 0 0 1740 103.500Z" fill="#d05030"/><path d="M1740 82.500A10.500 10.500 0 0 1 1740 103.500Z" fill="#f0e0c0"/>

<!-- ribbon groups -->
<g>
<path d="M979 0V60Q979 64 983 64H1119Q1122 64 1122 60V0Z" fill="#ececec" stroke="#b5b5b5"/>
<path d="M1127 0V60Q1127 64 1131 64H1239Q1242 64 1242 60V0Z" fill="#ececec" stroke="#b5b5b5"/>
<path d="M1247 0V60Q1247 64 1251 64H1416Q1419 64 1419 60V0Z" fill="#ececec" stroke="#b5b5b5"/>
<path d="M1423 0V60Q1423 64 1427 64H1536Q1539 64 1539 60V0Z" fill="#ececec" stroke="#b5b5b5"/>
<path d="M979 51H1122V60Q1122 64 1119 64H983Q979 64 979 60Z" fill="url(#br)"/>
<path d="M1127 51H1242V60Q1242 64 1239 64H1131Q1127 64 1127 60Z" fill="url(#br)"/>
<path d="M1247 51H1419V60Q1419 64 1416 64H1251Q1247 64 1247 60Z" fill="url(#br)"/>
<path d="M1423 51H1539V60Q1539 64 1536 64H1427Q1423 64 1423 60Z" fill="url(#br)"/>
<text class="bar" x="1044" y="62">Geometry</text><text class="bar" x="1179" y="62">Primitive</text><text class="bar" x="1333" y="62">Input</text><text class="bar" x="1478" y="62">Util</text>
<path d="M1113 57.500H1119M1116 54.500V60.500M1233 57.500H1239M1236 54.500V60.500M1410 57.500H1416M1413 54.500V60.500M1530 57.500H1536M1533 54.500V60.500" stroke="#999" stroke-width="1.600"/>
</g>
<!-- geometry hexes -->
<use href="#h" x="993" y="6"/><use href="#h" x="1022" y="6"/><use href="#h" x="1050" y="6"/><use href="#h" x="1078" y="6"/><use href="#h" x="1106" y="6"/>
<use href="#h" x="993" y="35"/><use href="#h" x="1022" y="35"/><use href="#h" x="1050" y="35"/><use href="#h" x="1078" y="35"/><use href="#h" x="1106" y="35"/>
<g fill="none" stroke="#ddd" stroke-width="2">
<ellipse cx="993" cy="7" rx="6" ry="4.500" stroke-width="2.200"/>
<path d="M1016 7L1026 2 1028 7 1019 12Z" fill="#bbb" stroke="#eee" stroke-width="1.200"/>
<circle cx="1050" cy="6" r="6" stroke-width="1"/><path d="M1044 6H1056M1050 0V12M1046 2L1054 10M1054 2L1046 10" stroke-width="1"/>
<path d="M1073 1V6A5 5 0 0 0 1083 6V1" stroke-width="2.500" stroke="#c8c8c8"/>
<circle cx="1102" cy="3" r="1.500" fill="#ddd"/><circle cx="1110" cy="3" r="1.500" fill="#ddd"/><circle cx="1102" cy="9" r="1.500" fill="#ddd"/><circle cx="1110" cy="9" r="1.500" fill="#ddd"/><circle cx="1106" cy="6" r="1" fill="#ddd"/>
<path d="M988 29Q996 29 997 41" stroke-width="2.200"/>
<path d="M1022 28L1028 35 1022 42 1016 35Z" stroke-width="2.200"/>
<path d="M1044 31L1056 28 1056 41 1048 41 1044 38Z" fill="#999" stroke="#ddd" stroke-width="1"/>
<circle cx="1078" cy="35" r="7" stroke="#999" stroke-width="1.500"/><circle cx="1078" cy="35" r="4.500" stroke="#bbb" stroke-width="1.500"/><circle cx="1078" cy="35" r="2" stroke="#ddd" stroke-width="1.500"/>
<path d="M1111 30Q1101 29 1102 36 1103 40 1108 38 1111 36 1105 35 1101 39 1109 41" stroke-width="1.600"/>
</g>
<!-- primitive hexes -->
<use href="#h" x="1142" y="6"/><use href="#h" x="1170" y="6"/><use href="#h" x="1198" y="6"/><use href="#h" x="1226" y="6"/>
<use href="#h" x="1142" y="35"/><use href="#h" x="1170" y="35"/><use href="#h" x="1198" y="35"/><use href="#h" x="1226" y="35"/>
<text x="1142" y="12" text-anchor="middle" font-size="14" fill="#ddd" font-weight="700" style="font-family:'Liberation Serif',serif">0.1</text>
<text x="1170" y="11" text-anchor="middle" font-size="10" fill="#eee">UC</text>
<text x="1198" y="10" text-anchor="middle" font-size="9" fill="#ddd">[8]</text>
<text x="1226" y="11" text-anchor="middle" font-size="10.500" fill="#ddd" font-weight="700">C:/</text>
<text x="1142" y="42" text-anchor="middle" font-size="17" fill="#eee" font-weight="700" style="font-family:'Liberation Serif',serif">A</text>
<path d="M1161 35H1179M1170 29V41" stroke="#eee" stroke-width="2.500"/>
<circle cx="1198" cy="35" r="5.500" fill="none" stroke="#ddd" stroke-width="2.200"/>
<circle cx="1226" cy="35" r="7" fill="#aaa"/><circle cx="1224" cy="33" r="3.500" fill="#ddd"/>
<!-- input -->
<rect x="1253" y="-2" width="18" height="20" rx="3" fill="#ddd" stroke="#333"/><rect x="1258" y="4" width="8" height="12" fill="#222"/>
<rect x="1281" y="-2" width="18" height="20" rx="3" fill="#ddd" stroke="#333"/><rect x="1284" y="1" width="12" height="14" fill="#333"/>
<rect x="1307" y="-2" width="22" height="21" fill="#3a3a3a"/><text x="1318" y="17" text-anchor="middle" font-size="17" font-weight="700" fill="#ddd">20</text>
<circle cx="1344" cy="8" r="10" fill="#e04040"/><path d="M1344 8L1344-2A10 10 0 0 1 1354 8Z" fill="#e0c020"/><path d="M1344 8L1354 8A10 10 0 0 1 1344 18Z" fill="#30b050"/><path d="M1344 8L1344 18A10 10 0 0 1 1334 8Z" fill="#4060d8"/><circle cx="1344" cy="8" r="5" fill="#f5f5f5"/>
<rect x="1363" y="-2" width="21" height="16" fill="#e4e4e4" stroke="#333"/><path d="M1363 14H1384V17H1363Z" fill="#222"/><text x="1373.500" y="9" text-anchor="middle" font-size="10" font-weight="700" fill="#111">XYZ</text>
<path d="M1391 8L1397 2H1412V14H1397Z" fill="#f08a10" stroke="#6a3a08"/><text x="1403" y="12" text-anchor="middle" font-size="9.500" fill="#8a0000" font-weight="700">ID.</text>
<circle cx="1262" cy="35" r="11.500" fill="#999" stroke="#444"/><circle cx="1262" cy="35" r="7" fill="#222"/>
<rect x="1279.500" y="24.500" width="22" height="22" rx="2" fill="#f4f4f4" stroke="#333"/><path d="M1280 35H1290V46H1280Z" fill="#bbb"/><path d="M1289 35V27" stroke="#d01010" stroke-width="3"/><path d="M1289 35H1299" stroke="#0a50e0" stroke-width="3"/><path d="M1286 28L1289 24 1292 28Z" fill="#d01010"/><circle cx="1289" cy="36" r="2.500" fill="#fff" stroke="#333"/>
<circle cx="1318" cy="35" r="11" fill="#181818"/><path d="M1318 35L1325 29M1318 35L1315 28" stroke="#eee" stroke-width="1.500"/>
<rect x="1335.500" y="24.500" width="22" height="22" rx="2" fill="#c9c9c9" stroke="#333"/><path d="M1339 44Q1346 44 1347 35T1354 27" fill="none" stroke="#111" stroke-width="2"/>
<rect x="1363" y="25" width="21" height="17" fill="#e4e4e4" stroke="#333"/><rect x="1363" y="42" width="21" height="3" fill="#222"/><text x="1373.500" y="36" text-anchor="middle" font-size="10" font-weight="700" fill="#111">IMG</text>
<rect x="1391" y="25" width="21" height="17" fill="#e4e4e4" stroke="#333"/><rect x="1391" y="42" width="21" height="3" fill="#222"/><circle cx="1398" cy="33" r="3.500" fill="#fff" stroke="#111" stroke-width="1.500"/><circle cx="1405" cy="33" r="3.500" fill="#fff" stroke="#111" stroke-width="1.500"/>
<!-- util -->
<circle cx="1438" cy="8" r="9" fill="#8a8a8a" stroke="#111" stroke-width="2.500"/>
<path d="M1459 17L1473 1" stroke="#333" stroke-width="7" stroke-linecap="round"/><path d="M1459 17L1473 1" stroke="#f0d9a0" stroke-width="4.500" stroke-linecap="round"/><path d="M1463 12L1468 6" stroke="#e89030" stroke-width="4"/>
<path d="M1484 5H1494V0L1504 8 1494 16V12H1484Z" fill="#eee" stroke="#777"/>
<path d="M1519-2H1525V6L1530 16H1514L1519 6Z" fill="#eee" stroke="#777"/><path d="M1516 12H1528L1530 16H1514Z" fill="#c03060"/>
<text x="1438" y="42" text-anchor="middle" font-size="15" font-style="italic" font-weight="700" fill="#111" transform="rotate(-14 1438 38)" style="font-family:'Liberation Serif',serif">ABC</text>
<path d="M1428 44L1450 38" stroke="#111"/>
<rect x="1455.500" y="25.500" width="22" height="22" rx="3" fill="#4a80e0" stroke="#2050b0" stroke-width="1.500"/><rect x="1459" y="29" width="15" height="15" fill="#c8c8c8"/><path d="M1461 31L1466 36 1471 31M1466 36V43" stroke="#888" fill="none"/>
<circle cx="1493" cy="34" r="7.500" fill="none" stroke="#111" stroke-width="2.500"/><path d="M1497 40L1504 46" stroke="#111" stroke-width="1.500"/>
<text x="1522" y="36" text-anchor="middle" font-size="14.500" font-style="italic" fill="#222" style="font-family:'Liberation Serif',serif">f(x)</text>
<path d="M1516 39H1528L1532 46H1512Z" fill="#d82828"/>

<!-- wires -->
<path d="M1320 310H1753" stroke="#ff7a2f" stroke-width="4" fill="none"/>
<path d="M1322 310C1365 310 1370 325 1428 326" stroke="#ff7a2f" stroke-width="4" fill="none"/>
<path d="M1322 310L1357 312" stroke="#ee1111" stroke-width="3"/>
<path d="M1574 374H1640" stroke="#ff7a2f" stroke-width="5"/>

<!-- param component -->
<circle class="gr" cx="1230" cy="310" r="4"/><circle class="gr" cx="1318" cy="310" r="4"/>
<rect x="1233" y="291" width="82" height="39" rx="4" fill="url(#og2)" stroke="#5a1e14" stroke-width="1.500"/>
<path d="M1254 310L1263.500 293H1282.500L1292 310 1282.500 327H1263.500Z" fill="url(#hx)" stroke="#333"/>
<circle cx="1273" cy="310" r="8" fill="none" stroke="#aaa" stroke-width="1.500"/><circle cx="1273" cy="310" r="4.500" fill="none" stroke="#ccc" stroke-width="1.500"/><path d="M1263 312Q1273 322 1283 306" fill="none" stroke="#ddd" stroke-width="1.500"/>
<use href="#bb" x="1297" y="274"/>

<!-- main component -->
<circle class="gr" cx="1430" cy="325" r="4"/><circle class="gr" cx="1430" cy="357" r="4"/><circle class="gr" cx="1430" cy="390" r="4"/><circle class="gr" cx="1430" cy="423" r="4"/><circle class="gr" cx="1570" cy="374" r="4"/>
<g fill="none" stroke="#b7a78a" stroke-width="1" opacity=".8"><path d="M1422 342Q1412 357 1422 372M1418 339Q1405 357 1418 375M1414 336Q1399 357 1414 378"/></g>
<rect x="1434" y="305.500" width="133" height="136" rx="4" fill="url(#og)" stroke="#5a1e14" stroke-width="1.500"/>
<rect x="1439" y="346" width="21" height="21" rx="3" fill="#d6d8da" stroke="#555" stroke-width="1.200"/>
<text x="1449.500" y="366" text-anchor="middle" font-size="24" font-weight="700" fill="#555">*</text>
<text class="lab" x="1478" y="331" text-anchor="middle">C</text><text class="lab" x="1478" y="363" text-anchor="middle">D</text><text class="lab" x="1478" y="396" text-anchor="middle">P</text><text class="lab" x="1478" y="429" text-anchor="middle">C</text><text class="lab" x="1544" y="380" text-anchor="middle">C</text>
<path d="M1499 386Q1502 365 1523 361" fill="none" stroke="#111" stroke-width="2.500"/><path d="M1510.500 386Q1513 375 1523 373" fill="none" stroke="#7a1010" stroke-width="2.500"/>
<circle cx="1499" cy="386" r="2.200" fill="#fff" stroke="#222"/><circle cx="1510.500" cy="386" r="2.200" fill="#fff" stroke="#222"/><circle cx="1523" cy="361" r="2.200" fill="#fff" stroke="#222"/><circle cx="1523" cy="373" r="2.200" fill="#fff" stroke="#222"/>
<use href="#bb" x="1549" y="289"/>

<!-- right component -->
<circle class="gr" cx="1642" cy="374" r="4"/><circle class="gr" cx="1642" cy="406" r="4"/><circle class="gr" cx="1755" cy="374" r="4"/><circle class="gr" cx="1755" cy="406" r="4"/>
<rect x="1645.500" y="354.500" width="105.500" height="71.500" rx="4" fill="url(#og2)" stroke="#5a1e14" stroke-width="1.500"/>
<text class="lab" x="1662" y="380" text-anchor="middle">C</text><text class="lab" x="1663" y="412" text-anchor="middle">R</text><text class="lab" x="1727" y="380" text-anchor="middle">S</text><text class="lab" x="1727" y="412" text-anchor="middle">V</text>
<path d="M1684 374Q1690 374 1691 382V398Q1692 404 1704 402" fill="none" stroke="#111" stroke-width="3"/>
<path d="M1686 384L1696 390M1696 382L1686 392" stroke="#b9793a" stroke-width="1"/><path d="M1683 394L1692 398M1692 392L1684 402" stroke="#b9793a" stroke-width="1"/>
<use href="#bb" x="1732" y="339"/>

<!-- gray component -->
<circle class="gr" cx="1645.500" cy="468" r="4"/>
<rect x="1650.500" y="445.500" width="101" height="45.500" rx="4" fill="url(#gy)" stroke="#44464c" stroke-width="1.500"/>
<text x="1665" y="474" text-anchor="middle" font-size="14" fill="#222">F</text><text x="1729" y="474" text-anchor="middle" font-size="14" fill="#222">V</text>
<path d="M1688 476L1697 459" stroke="#111" stroke-width="3"/><path d="M1693 458L1700 456 1699 464Z" fill="#111" stroke="#111"/><circle cx="1688" cy="477" r="2.300" fill="#fff" stroke="#111"/>
<text x="1702" y="481" text-anchor="middle" font-size="20" font-weight="700" fill="#222" style="font-family:'Liberation Serif',serif">Z</text>

<!-- cursor bottom right -->
<path d="M1747 838L1753 843V854H1751L1748 848Z" fill="#000"/>

<!-- subtitle -->
<text x="530" y="838" font-size="29.800" fill="#fff" stroke="#12eef2" stroke-width="1.100" paint-order="stroke" style="font-family:'Liberation Sans','Noto Sans CJK SC',sans-serif;font-weight:300">这里我们用打开附件内扶手程序，选取边缘制作扶手</text>
</svg>
</body></html>
